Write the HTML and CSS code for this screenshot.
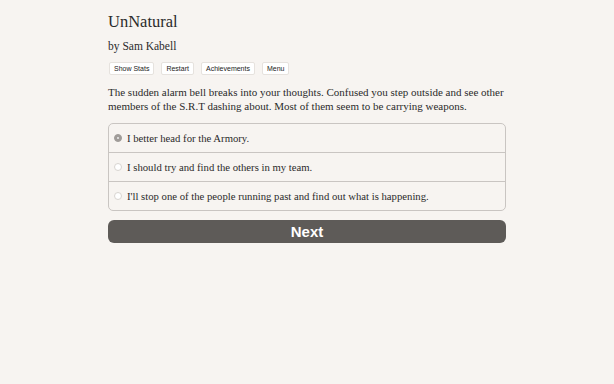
FILE: index.html
```html
<!DOCTYPE html>
<html>
<head>
<meta charset="utf-8">
<link rel="stylesheet" href="styles.css">
</head>
<body>
<div class="container">
  <h1 class="title">UnNatural</h1>
  <h2 class="author">by Sam Kabell</h2>
  <div class="buttons">
    <button class="small-btn">Show Stats</button>
    <button class="small-btn">Restart</button>
    <button class="small-btn">Achievements</button>
    <button class="small-btn">Menu</button>
  </div>
  <p class="story">The sudden alarm bell breaks into your thoughts. Confused you step outside and see other members of the S.R.T dashing about. Most of them seem to be carrying weapons.</p>
  <div class="choices">
    <label class="choice"><span class="radio checked"></span>I better head for the Armory.</label>
    <label class="choice"><span class="radio"></span>I should try and find the others in my team.</label>
    <label class="choice"><span class="radio"></span>I'll stop one of the people running past and find out what is happening.</label>
  </div>
  <button class="next">Next</button>
</div>
</body>
</html>
```
FILE: styles.css
```css
html, body {
  margin: 0;
  padding: 0;
  background: #f7f4f1;
}
body {
  font-family: "Liberation Serif", "Times New Roman", serif;
  color: #2b2b2b;
}
.container {
  width: 398px;
  margin: 0 auto;
  padding-top: 12px;
}
.title {
  font-size: 16.5px;
  font-weight: normal;
  margin: 0;
  line-height: 20px;
}
.author {
  font-size: 11.5px;
  font-weight: normal;
  margin: 7px 0 0;
  line-height: 14px;
}
.buttons {
  display: flex;
  gap: 7px;
  margin-top: 9px;
  padding-left: 1px;
}
.small-btn {
  font-family: "Liberation Sans", Arial, sans-serif;
  font-size: 7px;
  line-height: 9px;
  padding: 1px 4px;
  background: #fff;
  border: 1px solid #e6e2de;
  border-radius: 2px;
  color: #222;
}
.story {
  font-size: 11px;
  line-height: 14px;
  margin: 10px 0 0;
}
.choices {
  margin-top: 10px;
  border: 1px solid #c9c5c2;
  border-radius: 5px;
  display: flex;
  flex-direction: column;
}
.choice {
  display: flex;
  align-items: center;
  height: 28px;
  padding-left: 5px;
  font-size: 10.7px;
  border-top: 1px solid #c9c5c2;
}
.choice:first-child {
  border-top: none;
}
.radio {
  width: 8px;
  height: 8px;
  border-radius: 50%;
  border: 1px solid #d8d4d0;
  background: #fff;
  margin-right: 5px;
  box-sizing: border-box;
}
.radio.checked {
  background: #a09c99;
  border-color: #a09c99;
  position: relative;
}
.radio.checked::after {
  content: "";
  position: absolute;
  left: 2px;
  top: 2px;
  width: 2px;
  height: 2px;
  border-radius: 50%;
  background: #eee;
}
.next {
  display: block;
  width: 100%;
  margin-top: 9px;
  height: 23px;
  border: none;
  border-radius: 6px;
  background: #5e5b58;
  color: #fff;
  font-family: "Liberation Sans", Arial, sans-serif;
  font-weight: bold;
  font-size: 15px;
  padding: 0;
}
```
